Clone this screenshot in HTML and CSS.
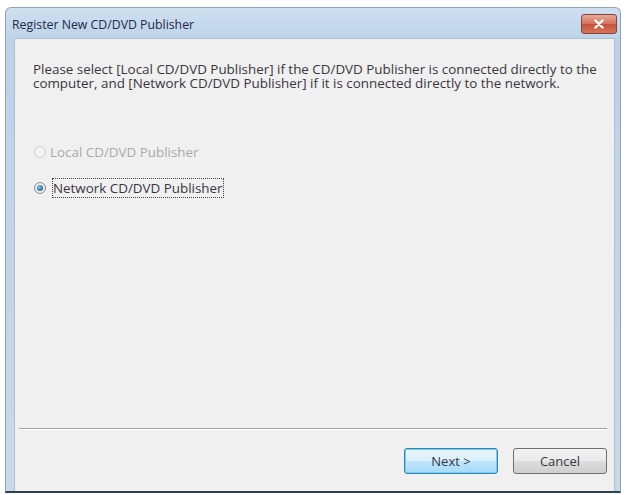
FILE: index.html
```html
<!DOCTYPE html>
<html>
<head>
<meta charset="utf-8">
<link rel="stylesheet" href="styles.css">
</head>
<body>
<div class="window">
  <div class="titlebar">
    <span class="title">Register New CD/DVD Publisher</span>
    <span class="close"><svg width="14" height="10" viewBox="0 0 14 10"><path d="M3.5 1.5 L10.5 8.5 M10.5 1.5 L3.5 8.5" stroke="#fff" stroke-width="2.4" stroke-linecap="round"/></svg></span>
  </div>
  <div class="client">
    <p class="intro">Please select [Local CD/DVD Publisher] if the CD/DVD Publisher is connected directly to the computer, and [Network CD/DVD Publisher] if it is connected directly to the network.</p>
    <div class="options">
      <label class="opt disabled"><span class="radio"></span><span>Local CD/DVD Publisher</span></label>
      <label class="opt"><span class="radio checked"></span><span class="focus">Network CD/DVD Publisher</span></label>
    </div>
    <div class="spacer"></div>
    <div class="sep"></div>
    <div class="buttons">
      <span class="btn default">Next &gt;</span>
      <span class="btn">Cancel</span>
    </div>
  </div>
</div>
</body>
</html>
```
FILE: styles.css
```css
html, body { margin: 0; padding: 0; background: #ffffff; }
body { font-family: "Open Sans", "DejaVu Sans", sans-serif; font-size: 13.4px; color: #38363e; }
.window {
  margin: 7px 0 0 5px;
  width: 616px;
  height: 486px;
  box-sizing: border-box;
  border: 1px solid #93a3b4;
  border-bottom: 2px solid #2e3f4f;
  border-radius: 6px 6px 0 0;
  background: linear-gradient(#cfdff0, #bcd2e9 34px, #c9d9ea);
  display: flex;
  flex-direction: column;
  padding: 0 5px 0 8px;
}
.titlebar {
  height: 30px;
  display: flex;
  align-items: center;
  justify-content: space-between;
  flex-shrink: 0;
}
.title { color: #23284a; font-size: 12.3px; margin-top: 2px; margin-left: -2px; }
.close {
  width: 36px; height: 20px;
  margin-right: -2px; margin-top: 1px;
  border: 1px solid #8a4436;
  border-radius: 3px;
  background: linear-gradient(#e6aa98, #d4705a 50%, #c4503a 51%, #d5755c);
  display: flex; align-items: center; justify-content: center;
  box-sizing: border-box;
}
.client {
  flex: 1;
  background: #f0f0f0;
  border: 1px solid #b0bfce;
  border-bottom: none;
  display: flex;
  flex-direction: column;
  padding: 0 7px 0 18px;
}
.intro { margin: 23px 0 0 0; line-height: 14px; }
.options { margin-top: 55px; display: flex; flex-direction: column; gap: 22px; }
.opt { display: flex; align-items: center; gap: 4px; height: 14px; }
.opt.disabled { color: #a9a9a9; }
.radio {
  width: 12px; height: 12px; border-radius: 50%;
  box-sizing: border-box;
  border: 1px solid #8a8c90;
  background: radial-gradient(circle, #ffffff 0, #e2e2e2 100%);
  position: relative;
  margin-left: 1px;
}
.opt.disabled .radio { border-color: #cacaca; background: #f3f3f3; }
.radio.checked::after {
  content: ""; position: absolute; left: 2px; top: 2px; width: 6px; height: 6px; border-radius: 50%;
  background: radial-gradient(circle at 40% 40%, #8fd0f0, #134f80 80%);
}
.focus { outline: 1px dotted #444; outline-offset: 0; margin-left: 3px; }
.spacer { flex: 1; }
.sep { height: 0; border-top: 1px solid #a0a0a0; border-bottom: 1px solid #ffffff; margin: 0 0 0 -14px; }
.buttons { display: flex; justify-content: flex-end; gap: 15px; padding: 18px 0 0; height: 61px; box-sizing: border-box; }
.btn {
  width: 94px; height: 26px; box-sizing: border-box;
  border: 1px solid #707070; border-radius: 3px;
  background: linear-gradient(#f2f2f2, #ebebeb 50%, #dddddd 51%, #cfcfcf);
  display: flex; align-items: center; justify-content: center;
  color: #38363e; font-size: 13px;
}
.btn.default { border-color: #3c7fb1; box-shadow: inset 0 0 0 1px #6ad3f5; background: linear-gradient(#eaf6fd, #d9f0fc 50%, #bee6fd 51%, #a7d9f5); }
```
